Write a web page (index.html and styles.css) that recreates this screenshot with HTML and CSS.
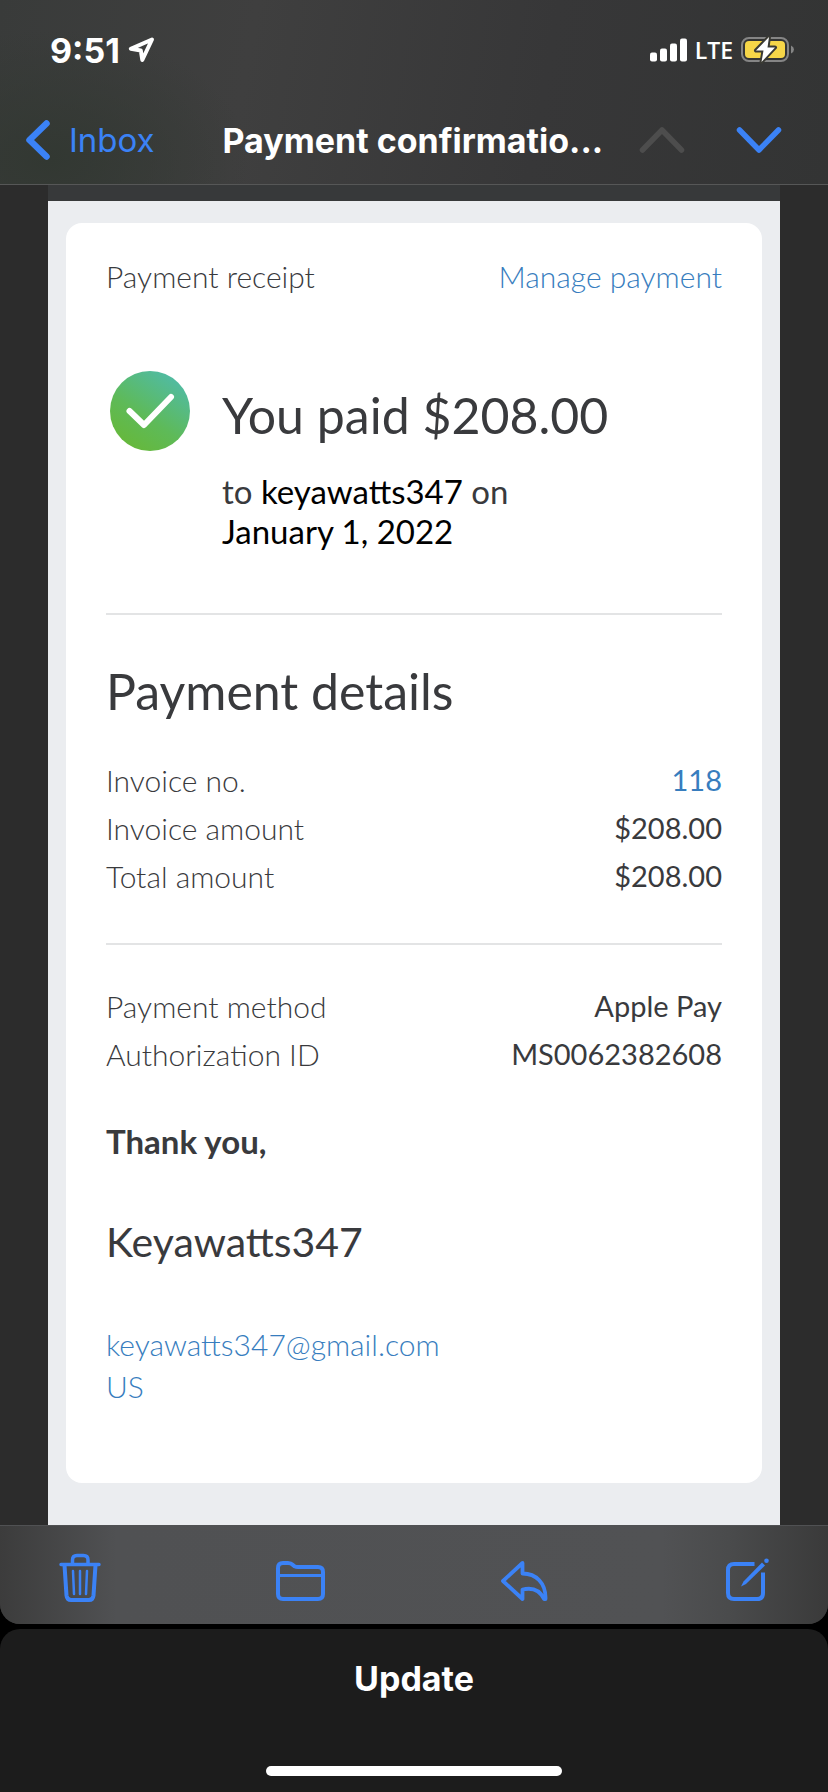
FILE: index.html
```html
<!DOCTYPE html>
<html lang="en">
<head>
<meta charset="utf-8">
<meta name="viewport" content="width=device-width, initial-scale=1">
<title>Payment confirmation</title>
<link rel="stylesheet" href="styles.css">
</head>
<body>
<div class="mail">
  <header class="top">
    <div class="status">
      <div class="status-group">
        <span class="time">9:51</span>
        <svg width="28" height="28" viewBox="0 0 28 28" aria-hidden="true"><path d="M24 3.500L2.800 12.800L12.800 14.500L14.300 24Z" fill="none" stroke="#fff" stroke-width="4" stroke-linejoin="round"/></svg>
      </div>
      <div class="status-group">
        <svg width="37" height="24" viewBox="0 0 37 24" aria-hidden="true"><g fill="#fff"><rect y="14.500" width="7" height="9" rx="2"/><rect x="10" y="10.500" width="7" height="13" rx="2"/><rect x="20" y="5.500" width="7" height="18" rx="2"/><rect x="30" y=".5" width="7" height="23" rx="2"/></g></svg>
        <span class="carrier">LTE</span>
        <svg class="battery" width="54" height="28" viewBox="0 0 54 28" aria-hidden="true"><rect x="1" y="2" width="46" height="23" rx="7" fill="none" stroke="#858585" stroke-width="2"/><rect x="4" y="5" width="40" height="17" rx="4" fill="#f6d648"/><path d="M50 9.500Q53 11 53 13.500T50 17.500Z" fill="#858585"/><path d="M28 1L15 14.500H22.500L20.500 26L34 11.500H26.500Z" fill="#fff" stroke="#3a3a34" stroke-width="4" stroke-linejoin="round" paint-order="stroke"/></svg>
      </div>
    </div>
    <nav class="nav">
      <a class="back" href="#inbox"><svg width="26" height="42" viewBox="0 0 26 42" aria-hidden="true"><path d="M21.500 4.500L4.500 21L21.500 37.500" fill="none" stroke="currentColor" stroke-width="6.500" stroke-linecap="round" stroke-linejoin="round"/></svg>Inbox</a>
      <h1 class="subject">Payment confirmatio...</h1>
      <div class="pager">
        <button class="icon-btn" type="button" aria-label="Previous message" disabled><svg width="46" height="28" viewBox="0 0 46 28" aria-hidden="true"><path d="M3.500 24L23 4L42.500 24" fill="none" stroke="currentColor" stroke-width="5.500" stroke-linecap="round" stroke-linejoin="round"/></svg></button>
        <button class="icon-btn" type="button" aria-label="Next message"><svg width="46" height="28" viewBox="0 0 46 28" aria-hidden="true"><path d="M3.500 4L23 24L42.500 4" fill="none" stroke="currentColor" stroke-width="5.500" stroke-linecap="round" stroke-linejoin="round"/></svg></button>
      </div>
    </nav>
  </header>

  <main class="message">
    <div class="sheet">
      <article class="card">
        <div class="card-head">
          <span>Payment receipt</span>
          <a class="link" href="#manage">Manage payment</a>
        </div>

        <section class="hero">
          <svg class="check" width="80" height="80" viewBox="0 0 80 80" aria-hidden="true"><defs><linearGradient id="green" x1="0.200" y1="1" x2="0.800" y2="0.100"><stop offset="0" stop-color="#67b837"/><stop offset=".45" stop-color="#5eba58"/><stop offset="1" stop-color="#51bba0"/></linearGradient></defs><circle cx="40" cy="40" r="40" fill="url(#green)"/><path d="M19.500 40L34 54L61 26" fill="none" stroke="#fff" stroke-width="6" stroke-linecap="round" stroke-linejoin="round"/></svg>
          <div>
            <h2 class="title">You paid $208.00</h2>
            <p class="payee">to <strong>keyawatts347</strong> on<br><strong>January 1, 2022</strong></p>
          </div>
        </section>

        <section class="block">
          <h2 class="title details-title">Payment details</h2>
          <table class="rows">
            <tr><th scope="row">Invoice no.</th><td><a class="link" href="#invoice">118</a></td></tr>
            <tr><th scope="row">Invoice amount</th><td>$208.00</td></tr>
            <tr><th scope="row">Total amount</th><td>$208.00</td></tr>
          </table>
        </section>

        <section class="block method">
          <table class="rows">
            <tr><th scope="row">Payment method</th><td>Apple Pay</td></tr>
            <tr><th scope="row">Authorization ID</th><td>MS0062382608</td></tr>
          </table>
          <p class="thanks">Thank you,</p>
          <p class="merchant">Keyawatts347</p>
          <address class="contact"><a class="link" href="mailto:keyawatts347@gmail.com">keyawatts347@gmail.com</a><a class="link" href="#us">US</a></address>
        </section>
      </article>
    </div>
  </main>

  <footer class="toolbar">
    <button class="icon-btn" type="button" aria-label="Delete"><svg width="42" height="50" viewBox="0 0 42 50" aria-hidden="true"><g fill="none" stroke="currentColor" stroke-linecap="round" stroke-linejoin="round"><path d="M2 11.500H40M13.500 11V7Q13.500 2.500 18 2.500H24.500Q29 2.500 29 7V11" stroke-width="3.500"/><path d="M5.500 12L7.500 42.500Q8 47 12 47H30Q34 47 34.500 42.500L36.500 12" stroke-width="4"/><path d="M14 18L15 41M21 18V41M28 18L27 41" stroke-width="2.500"/></g></svg></button>
    <button class="icon-btn" type="button" aria-label="Move to folder"><svg width="49" height="42" viewBox="0 0 49 42" aria-hidden="true"><g fill="none" stroke="currentColor" stroke-width="4"><path d="M2 33V7Q2 2 7 2H12Q15 2 17 4L18.500 5.200Q20 6 22 6H42Q47 6 47 11V33Q47 38 42 38H7Q2 38 2 33Z"/><path d="M2 14.500H47" stroke-width="3"/></g></svg></button>
    <button class="icon-btn" type="button" aria-label="Reply"><svg width="50" height="42" viewBox="0 0 50 42" aria-hidden="true"><path d="M21.500 2L2 20L21.500 38V28.500C32 26 39 29.500 43 38H44.500C45 22 35 12.500 21.500 12.500Z" fill="none" stroke="currentColor" stroke-width="3.800" stroke-linejoin="round"/></svg></button>
    <button class="icon-btn" type="button" aria-label="Compose"><svg width="43" height="45" viewBox="0 0 43 45" aria-hidden="true"><path d="M28.500 6H8Q2 6 2 12V35Q2 41 8 41H31Q37 41 37 35V14.500" fill="none" stroke="currentColor" stroke-width="4"/><path d="M36 4.500L39 7.500L20 26L15 28.500L17.500 23.500Z" fill="currentColor"/><circle cx="40.500" cy="2.700" r="2.300" fill="currentColor"/></svg></button>
  </footer>
</div>
<div class="update-panel">
  <button class="update" type="button">Update</button>
  <div class="home-indicator"></div>
</div>
</body>
</html>
```
FILE: styles.css
```css
* {
  box-sizing: border-box;
}

body {
  margin: 0;
  min-height: 100vh;
  display: flex;
  flex-direction: column;
  gap: 5px;
  background: #000;
  font-family: Lato, "Open Sans", sans-serif;
}

h1, h2, p {
  margin: 0;
  font-weight: 400;
}

a {
  text-decoration: none;
}

svg {
  display: block;
}

.mail {
  flex: 1;
  display: flex;
  flex-direction: column;
  overflow: hidden;
  border-radius: 0 0 20px 20px;
  background: #2c2c2c;
}

/* Status bar and navigation */
.top {
  border-bottom: 1px solid #565757;
  background:
    radial-gradient(ellipse 200px 130px at 50px 160px, #323832, transparent),
    linear-gradient(100deg, #393b3a, #3f3f3f 30%, #373738 65%, #333434);
  color: #fff;
  font-family: Inter, "Liberation Sans", sans-serif;
}

.status {
  height: 96px;
  padding: 4px 33px 0 50px;
  display: flex;
  align-items: center;
  justify-content: space-between;
}

.status-group {
  display: flex;
  align-items: center;
  gap: 8px;
}

.time {
  font-size: 34px;
  font-weight: 700;
}

.carrier {
  font-family: "Open Sans", sans-serif;
  font-size: 23px;
  font-weight: 600;
}

.nav {
  height: 88px;
  padding: 0 46px 0 25px;
  display: flex;
  align-items: center;
}

.back {
  display: flex;
  align-items: center;
  gap: 18px;
  color: #3b82f6;
  font-size: 33px;
}

.subject {
  flex: 1;
  padding-left: 32px;
  text-align: center;
  white-space: nowrap;
  font-size: 34px;
  font-weight: 700;
}

.pager {
  display: flex;
  gap: 51px;
}

.icon-btn {
  padding: 0;
  border: 0;
  background: none;
  color: #3b82f6;
}

.icon-btn:disabled {
  color: #4d4d4d;
}

/* Message */
.message {
  flex: 1;
  display: flex;
  padding: 0 48px;
}

.sheet {
  flex: 1;
  padding: 22px 18px 42px;
  border-top: 16px solid #37393a;
  background: #ebedf0;
}

.card {
  padding: 29px 40px 76px;
  border-radius: 16px;
  background: #fff;
  color: #393a3d;
  font-size: 30px;
  line-height: 48px;
}

.card-head {
  display: flex;
  justify-content: space-between;
  font-weight: 300;
}

.link {
  color: #377dbe;
}

.hero {
  display: flex;
  gap: 32px;
  padding: 87px 0 62px 4px;
}

.check {
  margin-top: -16px;
}

.title {
  font-size: 50px;
  line-height: 56px;
}

.payee {
  padding-top: 28px;
  font-size: 33px;
  line-height: 40px;
}

.payee strong {
  color: #000;
  font-weight: 400;
}

.block {
  padding: 48px 0 43px;
  border-top: 2px solid #e3e4e5;
}

.details-title {
  margin-bottom: 37px;
}

.method {
  padding: 37px 0 0;
}

.rows {
  width: 100%;
  border-collapse: collapse;
}

.rows th,
.rows td {
  padding: 0;
  text-align: left;
  font-weight: 300;
}

.rows td {
  text-align: right;
  font-size: 29px;
  font-weight: 400;
}

.thanks {
  padding-top: 43px;
  font-size: 33px;
  font-weight: 700;
  line-height: 40px;
}

.merchant {
  padding: 57px 0;
  font-size: 41px;
}

.contact {
  display: flex;
  flex-direction: column;
  align-items: flex-start;
  font-style: normal;
  font-weight: 300;
  line-height: 42px;
}

/* Bottom toolbar */
.toolbar {
  display: flex;
  align-items: flex-end;
  justify-content: space-between;
  padding: 27px 59px 21px;
  border-top: 1px solid #505153;
  background: linear-gradient(90deg, #3c3c3c, #505153 14%, #515254 80%, #4a4b4c 88%, #3a3a3a);
}

/* Update panel */
.update-panel {
  display: flex;
  flex-direction: column;
  align-items: center;
  gap: 67px;
  padding: 30px 24px 16px;
  border-radius: 20px 20px 0 0;
  background: #1c1c1c;
}

.update {
  padding: 0;
  border: 0;
  background: none;
  color: #fff;
  font-family: Inter, "Liberation Sans", sans-serif;
  font-size: 34px;
  font-weight: 700;
  line-height: 40px;
}

.home-indicator {
  width: 296px;
  height: 10px;
  border-radius: 5px;
  background: #fff;
}
```
